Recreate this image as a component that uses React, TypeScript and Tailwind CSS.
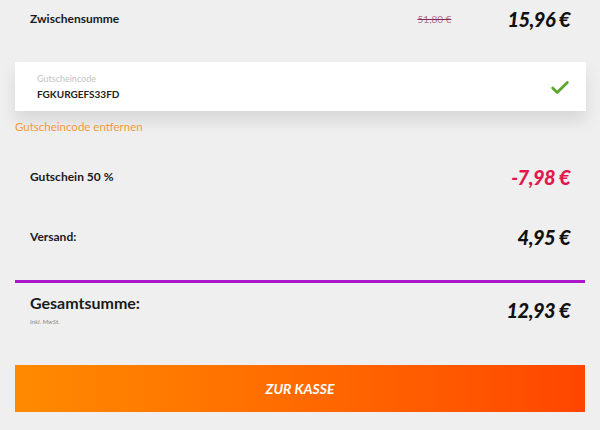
import { Check } from 'lucide-react'

const font = { fontFamily: 'Lato, "Open Sans", sans-serif' }

function PriceRow({ label, price, red }: { label: string; price: string; red?: boolean }) {
  return (
    <div className="flex h-[40px] items-center justify-between px-[15px]">
      <span className="text-[12px] font-bold text-[#1a1a1a]">{label}</span>
      <span
        className={`text-[20px] font-black italic tracking-tight ${red ? 'text-[#e3174b]' : 'text-[#111]'}`}
      >
        {price}
      </span>
    </div>
  )
}

export default function App() {
  return (
    <div className="min-h-[430px] w-[600px] bg-[#efefef] px-[15px]" style={font}>
      {/* Zwischensumme */}
      <div className="flex h-[38px] items-center justify-between px-[15px]">
        <span className="text-[12px] font-bold text-[#1a1a1a]">Zwischensumme</span>
        <div className="flex items-center gap-[56px]">
          <span className="text-[10px] text-[#b07090] line-through decoration-[#8a2a5a]">51,80 €</span>
          <span className="text-[20px] font-black italic tracking-tight text-[#111]">15,96 €</span>
        </div>
      </div>

      {/* Gutscheincode Box */}
      <div className="mt-[24px] flex h-[49px] w-[571px] items-center justify-between bg-white pl-[22px] pr-[14px] shadow-[0_10px_16px_rgba(0,0,0,0.10)]">
        <div className="flex flex-col">
          <span className="text-[9px] leading-[12px] text-[#c4c4c4]">Gutscheincode</span>
          <span className="mt-[3px] text-[10px] font-bold leading-[12px] text-[#222]">FGKURGEFS33FD</span>
        </div>
        <Check className="mt-[2px] h-[22px] w-[24px] text-[#5ba82c]" strokeWidth={3} />
      </div>

      <div className="mt-[8px] text-[11.5px] leading-[16px] text-[#f39a3c]">Gutscheincode entfernen</div>

      <div className="mt-[22px]">
        <PriceRow label="Gutschein 50 %" price="-7,98 €" red />
      </div>
      <div className="mt-[20px]">
        <PriceRow label="Versand:" price="4,95 €" />
      </div>

      <div className="mt-[23px] h-[3px] bg-[#a915c9]" />

      {/* Gesamtsumme */}
      <div className="flex items-center justify-between px-[15px] pt-[10px]">
        <div className="flex flex-col">
          <span className="text-[16px] font-bold leading-[20px] text-[#1a1a1a]">Gesamtsumme:</span>
          <span className="mt-[4px] text-[6.5px] italic leading-[10px] text-[#888]">inkl. MwSt.</span>
        </div>
        <span className="text-[20px] font-black italic tracking-tight text-[#111]">12,93 €</span>
      </div>

      <button className="mt-[38px] flex h-[47px] w-[570px] items-center justify-center bg-gradient-to-r from-[#ff8a00] via-[#ff6a00] to-[#ff4500] text-[14px] font-bold italic text-white">
        ZUR KASSE
      </button>
    </div>
  )
}
